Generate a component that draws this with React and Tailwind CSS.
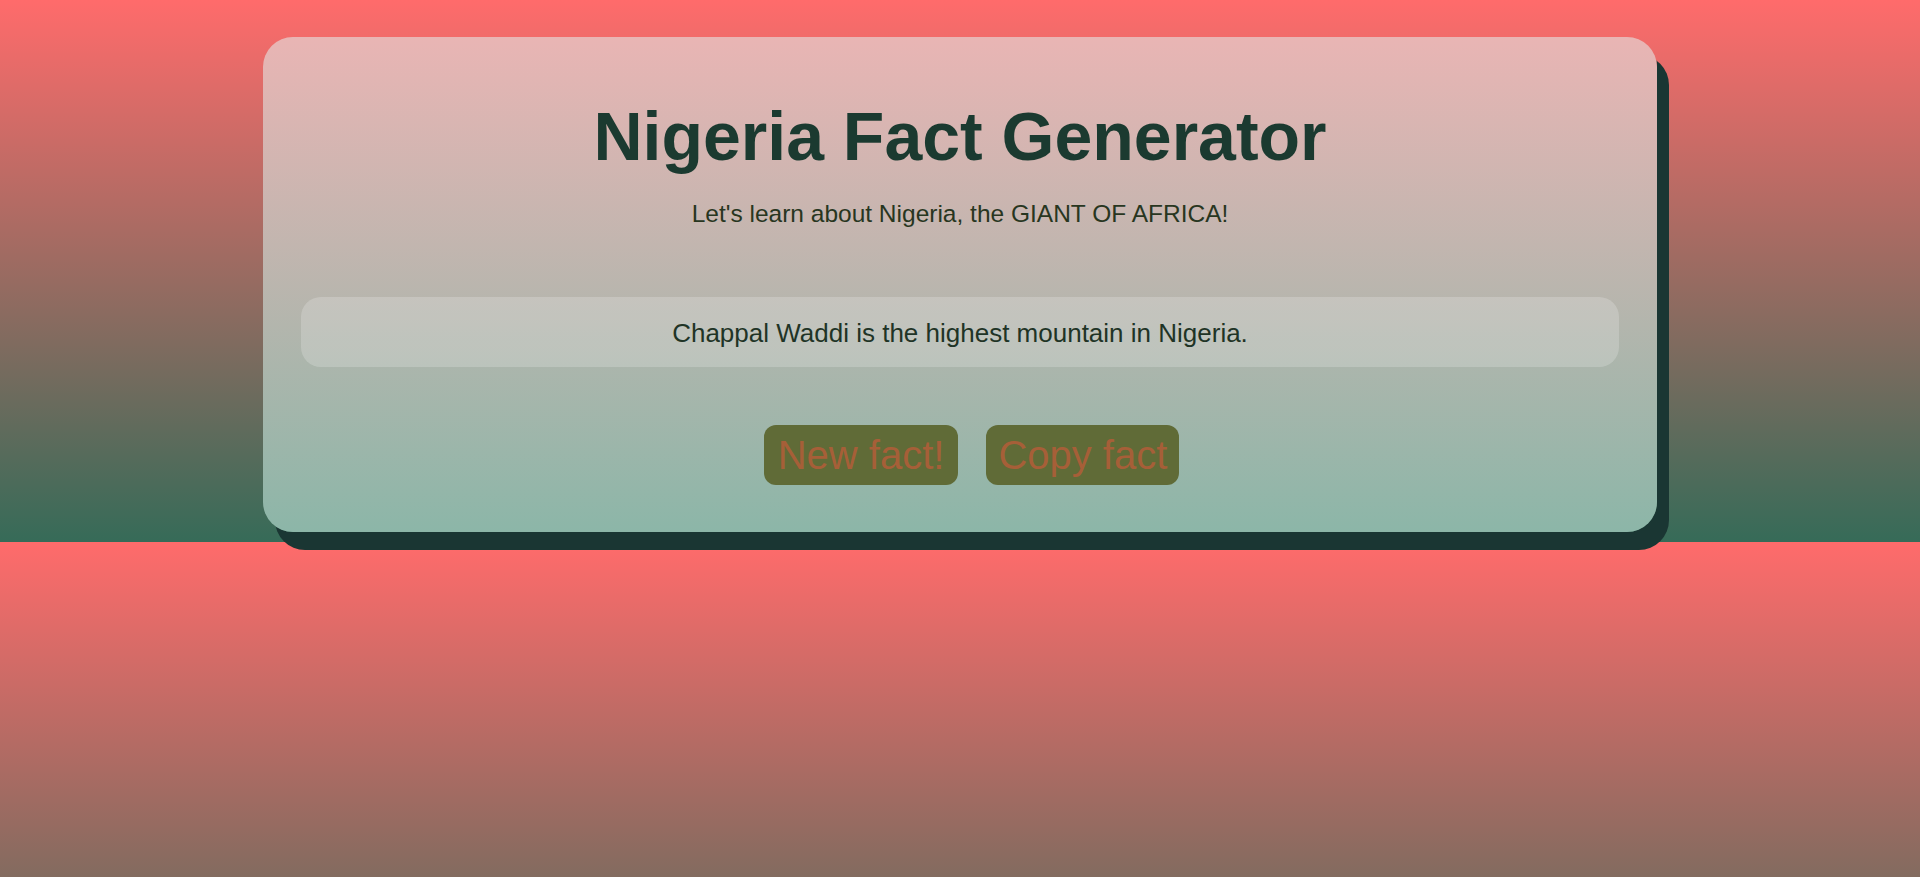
import React, { useState } from "react";

const facts = [
  "Chappal Waddi is the highest mountain in Nigeria.",
  "Nigeria is the most populous country in Africa.",
  "Lagos is the largest city in Nigeria.",
  "Abuja became the capital of Nigeria in 1991.",
  "The Niger River gives Nigeria its name.",
];

const App = () => {
  const [index, setIndex] = useState(0); // current fact

  const newFact = () => {
    setIndex((i) => (i + 1) % facts.length);
  };

  const copyFact = () => {
    navigator.clipboard?.writeText(facts[index]).catch(() => {});
  };

  return (
    <div className="min-h-screen w-full bg-[linear-gradient(to_bottom,#ff6b6b,#366b58)] bg-[length:100%_542px] bg-repeat pt-[37px] font-['Liberation_Sans',Arial,sans-serif]">
      <div className="mx-auto w-[1394px] rounded-[30px] bg-[linear-gradient(to_bottom,#e9b5b4,#8cb6a8)] px-[38px] pt-[65px] pb-[47px] shadow-[12px_18px_0_#1a3633]">
        <h1 className="text-center text-[68px] font-bold leading-[68px] text-[#1b3a30]">
          Nigeria Fact Generator
        </h1>
        <p className="mt-[28px] text-center text-[24.5px] leading-[32px] text-[#28361f]">
          Let's learn about Nigeria, the GIANT OF AFRICA!
        </p>

        <div className="mt-[67px] rounded-[20px] bg-white/20 pt-[20px] pb-[18px] text-center text-[26px] leading-[32px] text-[#1f3426]">
          {facts[index]}
        </div>

        <div className="mt-[58px] flex justify-center gap-[28px] pl-[23px]">
          <button
            onClick={newFact}
            className="h-[60px] rounded-[12px] bg-[#606b37] px-[14px] text-[40px] leading-[60px] text-[#a65f38]"
          >
            New fact!
          </button>
          <button
            onClick={copyFact}
            className="h-[60px] rounded-[12px] bg-[#606b37] px-[12px] text-[40px] leading-[60px] text-[#a65f38]"
          >
            Copy fact
          </button>
        </div>
      </div>
    </div>
  );
};

export default App;
